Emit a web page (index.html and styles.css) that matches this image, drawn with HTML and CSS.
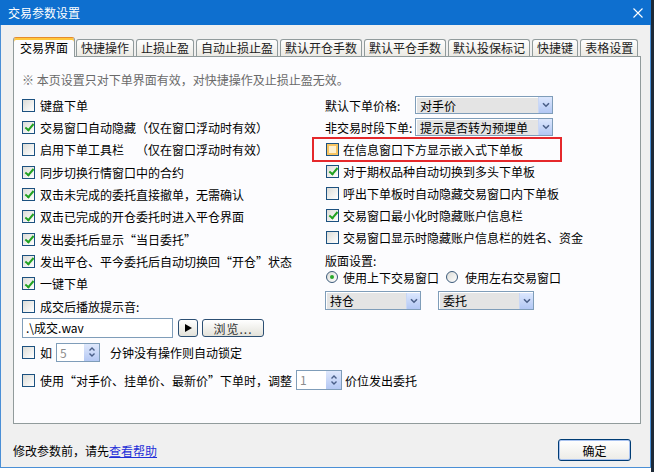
FILE: index.html
```html
<!DOCTYPE html>
<html lang="zh">
<head>
<meta charset="utf-8">
<title>交易参数设置</title>
<link rel="stylesheet" href="styles.css">
</head>
<body>
<div class="window">
  <div class="titlebar">
    <span class="title">交易参数设置</span>
    <svg class="close" viewBox="0 0 10 10"><path d="M0.5 0.5 L9.5 9.5 M9.5 0.5 L0.5 9.5" stroke="#fff" stroke-width="1.1" fill="none"/></svg>
  </div>
  <div class="body">
    <div class="tabs">
      <div class="tab active">交易界面</div>
      <div class="tab">快捷操作</div>
      <div class="tab">止损止盈</div>
      <div class="tab">自动止损止盈</div>
      <div class="tab">默认开仓手数</div>
      <div class="tab">默认平仓手数</div>
      <div class="tab">默认投保标记</div>
      <div class="tab">快捷键</div>
      <div class="tab">表格设置</div>
    </div>
    <div class="panel">
      <div class="note">※ 本页设置只对下单界面有效，对快捷操作及止损止盈无效。</div>
      <div class="cols">
        <div class="col-left">
          <div class="lrow"><span class="cb"></span>键盘下单</div>
          <div class="lrow"><span class="cb on"></span>交易窗口自动隐藏（仅在窗口浮动时有效）</div>
          <div class="lrow"><span class="cb"></span><span class="fixw">启用下单工具栏</span>（仅在窗口浮动时有效）</div>
          <div class="lrow"><span class="cb on"></span>同步切换行情窗口中的合约</div>
          <div class="lrow"><span class="cb on"></span>双击未完成的委托直接撤单，无需确认</div>
          <div class="lrow"><span class="cb on"></span>双击已完成的开仓委托时进入平仓界面</div>
          <div class="lrow"><span class="cb on"></span>发出委托后显示“当日委托”</div>
          <div class="lrow"><span class="cb on"></span>发出平仓、平今委托后自动切换回“开仓”状态</div>
          <div class="lrow"><span class="cb on"></span>一键下单</div>
          <div class="lrow"><span class="cb"></span>成交后播放提示音:</div>
        </div>
        <div class="col-right">
          <div class="rrow"><span class="lbl">默认下单价格:</span>
            <div class="select w138"><span>对手价</span><span class="dd"><svg viewBox="0 0 8 6"><path d="M1 1.2 L4 4.2 L7 1.2" stroke="#4a5f88" stroke-width="1.6" fill="none"/></svg></span></div>
          </div>
          <div class="rrow"><span class="lbl">非交易时段下单:</span>
            <div class="select w138"><span>提示是否转为预埋单</span><span class="dd"><svg viewBox="0 0 8 6"><path d="M1 1.2 L4 4.2 L7 1.2" stroke="#4a5f88" stroke-width="1.6" fill="none"/></svg></span></div>
          </div>
          <div class="rrow"><span class="mark"></span><span class="cb hot"></span>在信息窗口下方显示嵌入式下单板</div>
          <div class="rrow"><span class="cb on"></span>对于期权品种自动切换到多头下单板</div>
          <div class="rrow"><span class="cb"></span>呼出下单板时自动隐藏交易窗口内下单板</div>
          <div class="rrow"><span class="cb on"></span>交易窗口最小化时隐藏账户信息栏</div>
          <div class="rrow"><span class="cb"></span>交易窗口显示时隐藏账户信息栏的姓名、资金</div>
          <div class="layout-label">版面设置:</div>
          <div class="radio-row"><span class="radio on"></span>使用上下交易窗口<span class="radio r2"></span>使用左右交易窗口</div>
          <div class="sel-row">
            <div class="select w96"><span>持仓</span><span class="dd"><svg viewBox="0 0 8 6"><path d="M1 1.2 L4 4.2 L7 1.2" stroke="#4a5f88" stroke-width="1.6" fill="none"/></svg></span></div>
            <div class="select w96"><span>委托</span><span class="dd"><svg viewBox="0 0 8 6"><path d="M1 1.2 L4 4.2 L7 1.2" stroke="#4a5f88" stroke-width="1.6" fill="none"/></svg></span></div>
          </div>
        </div>
      </div>
      <div class="file-row">
        <div class="file">.\成交.wav</div>
        <div class="play"><svg viewBox="0 0 10 10"><path d="M2 1 L9 5 L2 9 Z" fill="#000"/></svg></div>
        <div class="browse">浏览...</div>
      </div>
      <div class="lock-row">
        <span class="cb"></span>如
        <div class="spin s1"><span>5</span><span class="arrows"><svg viewBox="0 0 8 12"><path d="M1.5 4.5 L4 2 L6.5 4.5 M1.5 7.5 L4 10 L6.5 7.5" stroke="#4a5f88" stroke-width="1.4" fill="none"/></svg></span></div>
        <span class="after1">分钟没有操作则自动锁定</span>
      </div>
      <div class="adj-row">
        <span class="cb"></span>使用“对手价、挂单价、最新价”下单时，调整
        <div class="spin s2"><span>1</span><span class="arrows"><svg viewBox="0 0 8 12"><path d="M1.5 4.5 L4 2 L6.5 4.5 M1.5 7.5 L4 10 L6.5 7.5" stroke="#4a5f88" stroke-width="1.4" fill="none"/></svg></span></div>
        <span class="after2">价位发出委托</span>
      </div>
    </div>
    <div class="footer">
      <span>修改参数前，请先<a class="link" href="#">查看帮助</a></span>
      <div class="ok">确定</div>
    </div>
  </div>
</div>
</body>
</html>
```

FILE: styles.css
```css
* { box-sizing: border-box; }
html, body { margin: 0; padding: 0; }
body {
  width: 654px;
  height: 472px;
  overflow: hidden;
  background: linear-gradient(to right, #ffffff 651px, #1d2a38 651px);
  font-family: "Noto Sans CJK SC", "Noto Sans", sans-serif;
  font-size: 12px;
  color: #000;
}
.window {
  width: 651px;
  height: 468px;
  border: 1px solid #4a8fd6;
  border-top: none;
  background: #f0f0f0;
  display: flex;
  flex-direction: column;
}
.titlebar {
  height: 25px;
  margin: 0 -1px;
  background: #0e6fcf;
  color: #fff;
  display: flex;
  align-items: center;
  justify-content: space-between;
  padding: 0 8px 0 8px;
  flex: none;
}
.title { font-size: 12px; line-height: 14px; }
.close { width: 10px; height: 10px; display: block; }

.body {
  flex: 1;
  display: flex;
  flex-direction: column;
  padding: 12px 9px 0 12px;
}
.tabs {
  display: flex;
  align-items: flex-end;
  height: 19px;
  padding-left: 2px;
  gap: 2px;
  position: relative;
  z-index: 1;
  flex: none;
}
.tab {
  height: 17px;
  padding: 0 4px;
  border: 1px solid #919b9c;
  border-bottom: none;
  border-radius: 3px 3px 0 0;
  background: linear-gradient(#fefefe, #eceae4);
  line-height: 16px;
  white-space: nowrap;
  color: #222;
}
.tab.active {
  height: 20px;
  margin: 0 -1px -1px -2px;
  padding: 0 6px;
  background: #fcfcfe;
  border-top: 1px solid #e68b2c;
  box-shadow: inset 0 2px 0 #ffc73c;
  line-height: 19px;
  color: #000;
}
.panel {
  height: 368px;
  border: 1px solid #919b9c;
  background: #fcfcfe;
  padding: 16px 0 0 8px;
  flex: none;
}
.note { height: 14px; line-height: 14px; color: #6a6a6a; white-space: nowrap; }
.cols { display: flex; margin-top: 7px; }
.col-left { width: 303px; flex: none; }
.lrow {
  height: 22.33px;
  display: flex;
  align-items: center;
  white-space: nowrap;
}
.fixw { display: inline-block; width: 96px; }
.cb {
  width: 13px;
  height: 13px;
  flex: none;
  border: 1px solid #1c5180;
  background: linear-gradient(135deg, #dcdcd7, #ffffff);
  margin-right: 5px;
  position: relative;
}
.cb.on::after {
  content: "";
  position: absolute;
  left: 3.5px;
  top: 0.5px;
  width: 3px;
  height: 7px;
  border: solid #21a121;
  border-width: 0 2px 2px 0;
  transform: rotate(40deg);
}
.cb.hot {
  background: #fdf0cf;
  box-shadow: inset 0 0 0 2px #f7c461;
}
.col-right { flex: 1; }
.rrow {
  height: 22px;
  display: flex;
  align-items: center;
  white-space: nowrap;
  position: relative;
}
.rrow .cb { margin-left: 1px; margin-right: 4px; }
.lbl { width: 90px; flex: none; }
.select {
  height: 18px;
  border: 1px solid #7f9db9;
  background: #e4e4e4;
  box-shadow: inset 1px 1px 0 #fff;
  display: flex;
  align-items: center;
  justify-content: space-between;
  padding-left: 4px;
  white-space: nowrap;
}
.w138 { width: 138px; }
.w96 { width: 96px; height: 19px; }
.dd {
  width: 14px;
  height: 16px;
  background: linear-gradient(#dce7fd, #b2c7f4);
  border-left: 1px solid #c9d7f5;
  display: flex;
  align-items: center;
  justify-content: center;
}
.dd svg { width: 8px; height: 6px; display: block; }
.mark {
  position: absolute;
  left: -13px;
  top: -1px;
  width: 250px;
  height: 25px;
  border: 2px solid #e5282b;
}
.layout-label { margin-top: 5px; height: 16px; line-height: 16px; }
.radio-row { height: 16px; display: flex; align-items: center; white-space: nowrap; }
.radio {
  width: 12px;
  height: 12px;
  border-radius: 50%;
  border: 1px solid #3b5a7a;
  background: linear-gradient(135deg, #dcdcd7, #ffffff);
  margin: 0 5px 0 1px;
  position: relative;
  flex: none;
}
.radio.on::after {
  content: "";
  position: absolute;
  left: 3px;
  top: 3px;
  width: 4px;
  height: 4px;
  border-radius: 50%;
  background: #2aa82a;
}
.radio.r2 { margin-left: 7px; margin-right: 7px; }
.sel-row { margin-top: 6px; display: flex; gap: 17px; }

.file-row { display: flex; align-items: center; height: 20px; margin-top: 1px; }
.file {
  width: 151px;
  height: 20px;
  border: 1px solid #7f9db9;
  background: #fff;
  padding-left: 3px;
  line-height: 18px;
  white-space: nowrap;
}
.play {
  width: 20px;
  height: 18px;
  margin-left: 5px;
  border: 1px solid #2c4f73;
  border-radius: 3px;
  background: linear-gradient(#ffffff, #e3e2da);
  display: flex;
  align-items: center;
  justify-content: center;
}
.play svg { width: 10px; height: 10px; display: block; }
.browse {
  width: 62px;
  height: 18px;
  margin-left: 4px;
  border: 1px solid #2c4f73;
  border-radius: 3px;
  background: linear-gradient(#ffffff, #e3e2da);
  display: flex;
  align-items: center;
  justify-content: center;
  color: #333;
  letter-spacing: 1px;
}
.lock-row, .adj-row {
  display: flex;
  align-items: center;
  height: 20px;
  white-space: nowrap;
}
.lock-row { margin-top: 4px; }
.adj-row { margin-top: 8px; }
.spin {
  height: 19px;
  border: 1px solid #7f9db9;
  background: #fff;
  color: #8c8c8c;
  display: flex;
  justify-content: space-between;
  align-items: stretch;
  padding-left: 3px;
  margin-left: 4px;
  line-height: 17px;
}
.s1 { width: 44px; }
.s2 { width: 46px; height: 20px; }
.arrows {
  width: 15px;
  background: linear-gradient(#dfe8fc, #b4c8f3);
  display: flex;
  align-items: center;
  justify-content: center;
}
.arrows svg { width: 8px; height: 12px; display: block; }
.after1 { margin-left: 10px; }
.after2 { margin-left: 3px; }

.footer {
  margin-top: 15px;
  height: 22px;
  display: flex;
  align-items: center;
  justify-content: space-between;
  padding-right: 10px;
  white-space: nowrap;
}
.link { color: #1f2fd8; text-decoration: underline; }
.ok {
  width: 73px;
  height: 22px;
  border: 1px solid #003c74;
  border-radius: 3px;
  background: linear-gradient(#ffffff, #ecebe6);
  box-shadow: inset 0 0 0 1px #a9c3f0;
  display: flex;
  align-items: center;
  justify-content: center;
}
```
